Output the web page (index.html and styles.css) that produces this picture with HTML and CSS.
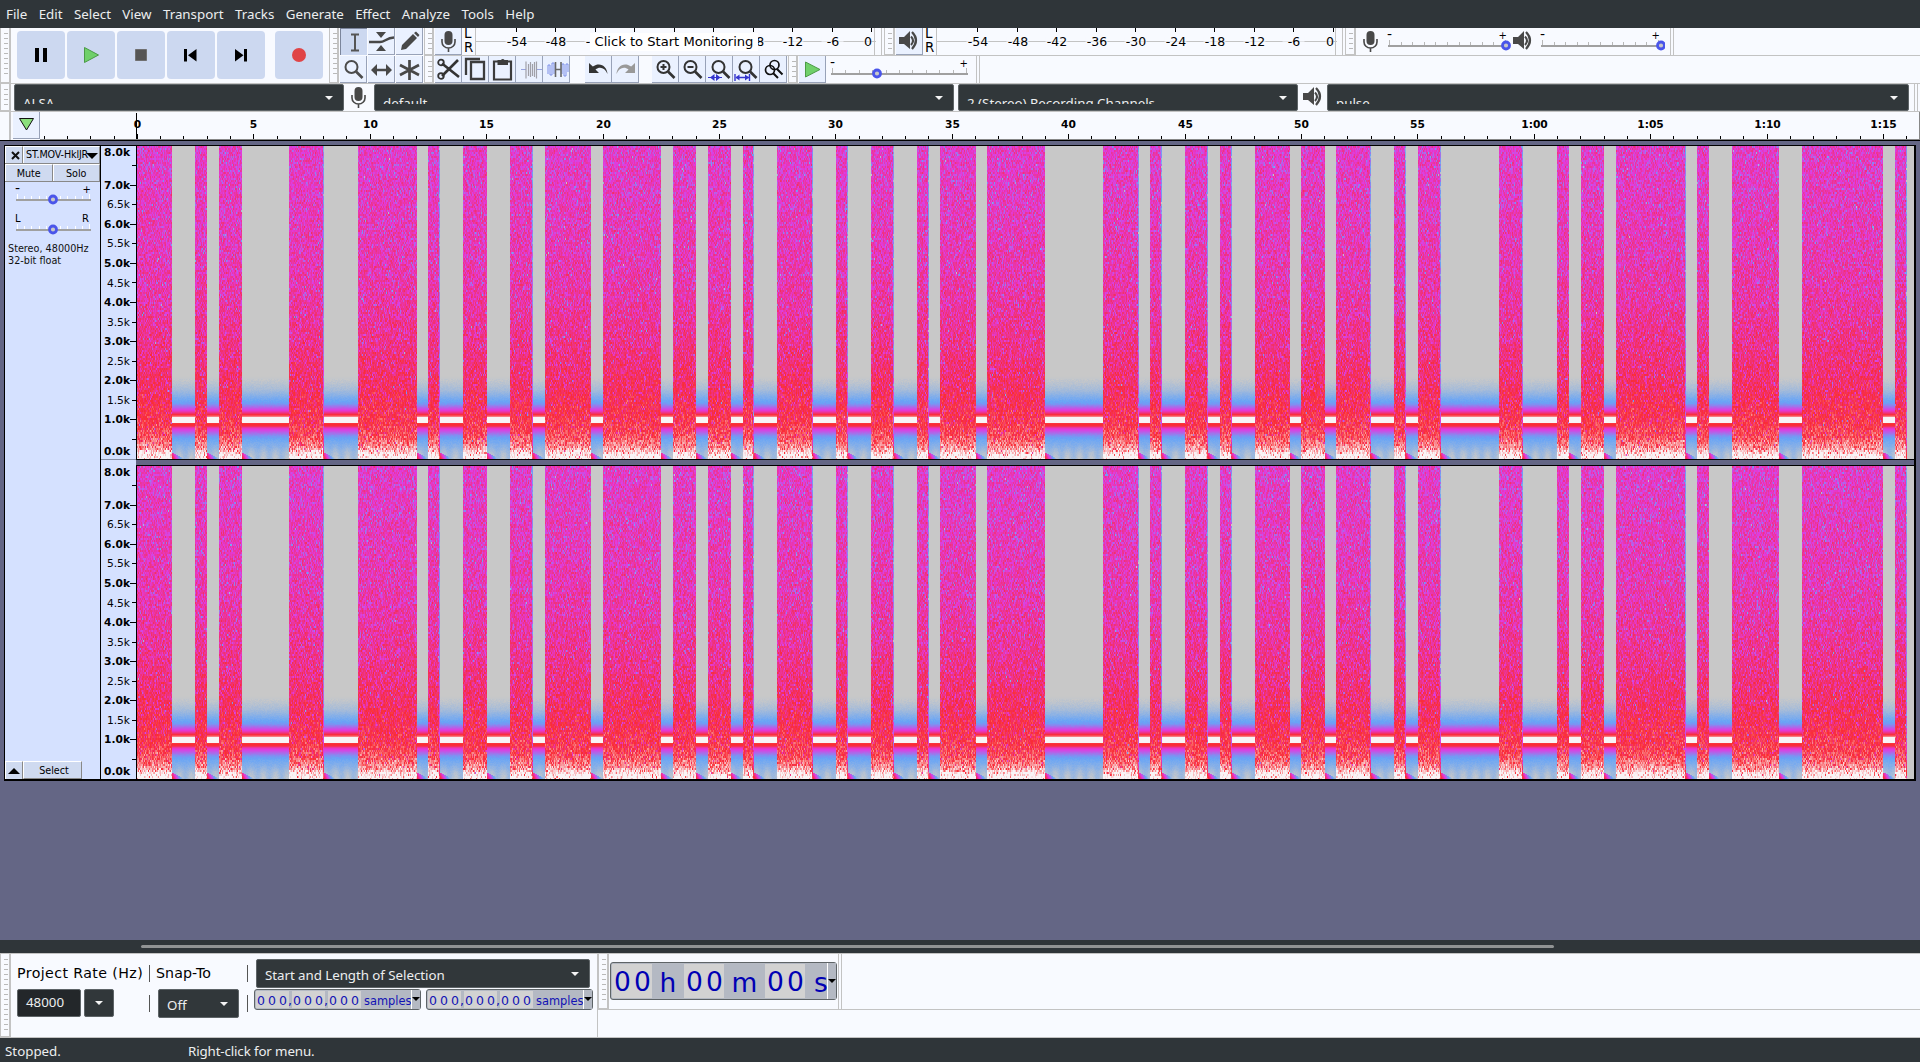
FILE: index.html
```html
<!DOCTYPE html>
<html lang="en">
<head>
<meta charset="utf-8">
<title>Audacity</title>
<link rel="stylesheet" href="styles.css">
</head>
<body>
<svg class="defs" width="0" height="0">
  <symbol id="mic" viewBox="0 0 27 27"><rect x="9.5" y="3" width="8" height="14" rx="4" fill="#484848"/><path d="M7 11v3a6.5 6 0 0 0 13 0v-3M13.5 20v4" fill="none" stroke="#484848" stroke-width="1.6"/></symbol>
  <symbol id="speaker" viewBox="0 0 27 27"><path d="M3 9h5l6-6v18l-6-5H3z" fill="#484848"/><path d="M15 8.500q4 4 0 8.500" fill="none" stroke="#484848" stroke-width="2"/><path d="M16 4q8 8 0 17" fill="none" stroke="#484848" stroke-width="2.200"/></symbol>
  <symbol id="lens" viewBox="0 0 27 27"><circle cx="11.500" cy="11" r="6" fill="none" stroke="currentColor" stroke-width="2"/><path d="M16 15.500l6.500 6.500" stroke="currentColor" stroke-width="2.600"/></symbol>
</svg>

<nav class="menubar"><span>File</span><span>Edit</span><span>Select</span><span>View</span><span>Transport</span><span>Tracks</span><span>Generate</span><span>Effect</span><span>Analyze</span><span>Tools</span><span>Help</span></nav>

<section class="dock">
  <div class="transport">
    <div class="grip"></div>
    <div class="transport-buttons">
      <button class="big"><svg viewBox="0 0 48 48"><path d="M18 17h4v14h-4zM26 17h4v14h-4z"/></svg></button>
      <button class="big"><svg viewBox="0 0 48 48"><path d="M17.500 16.500v15l14-7.500z" fill="#6fd06a" stroke="#4b9a47"/></svg></button>
      <button class="big"><svg viewBox="0 0 48 48"><path d="M18.500 18.500h11v11h-11z" fill="#555" stroke="#707070"/></svg></button>
      <button class="big"><svg viewBox="0 0 48 48"><path d="M17 18h3v12.500h-3zM29.500 18v12.500l-8.500-6.200z"/></svg></button>
      <button class="big"><svg viewBox="0 0 48 48"><path d="M27 18h3v12.500h-3zM18 18v12.500l8.500-6.200z"/></svg></button>
      <button class="big rec"><svg viewBox="0 0 48 48"><circle cx="24" cy="24" r="7" fill="#e04446"/></svg></button>
    </div>
  </div>
  <div class="tools">
    <div class="grip"></div>
    <div class="tool-grid">
      <button class="t on"><svg viewBox="0 0 27 27"><path d="M10 5.500h8M10 21.500h8M14 5.500v16" fill="none" stroke="#555" stroke-width="2"/></svg></button>
      <button class="t"><svg viewBox="0 0 27 27"><path d="M8 4h10l-5 6zM8 23h10l-5-6z" fill="#484848"/><path d="M1 14h11c5 0 6-4 14-4.500" fill="none" stroke="#484848" stroke-width="2.400"/></svg></button>
      <button class="t"><svg viewBox="0 0 27 27"><path d="M5 22l1-5L17 6l4 4L10 21zM18 5l2-1.500 3.500 3.500L22 9z" fill="#484848"/></svg></button>
      <button class="t grey"><svg viewBox="0 0 27 27"><use href="#lens"/></svg></button>
      <button class="t"><svg viewBox="0 0 27 27"><path d="M3 14l6-6v4.700h9V8l6 6-6 6v-4.700H9V20z" fill="#484848"/></svg></button>
      <button class="t"><svg viewBox="0 0 27 27"><path d="M13.500 4v20M4 9l19 10M4 19L23 9" stroke="#484848" stroke-width="2.700"/></svg></button>
    </div>
  </div>
  <div class="bars">
    <div class="bar">
      <div class="grip"></div>
      <button class="t"><svg viewBox="0 0 27 27"><use href="#mic"/></svg></button>
      <div class="lr"><span>L</span><span>R</span></div>
      <div class="meter rec-meter"><svg class="meter-scale" data-first="40.500" data-step="39.500" width="401" height="27"></svg><span class="monitor">Click to Start Monitoring</span></div>
      <i class="end"></i>
      <div class="grip wide"></div>
      <button class="t"><svg viewBox="0 0 27 27"><use href="#speaker"/></svg></button>
      <div class="lr"><span>L</span><span>R</span></div>
      <div class="meter"><svg class="meter-scale" data-first="41" data-step="39.550" width="401" height="27"></svg></div>
      <i class="end"></i>
      <div class="grip wide"></div>
      <svg class="mix-icon" viewBox="0 0 27 27"><use href="#mic"/></svg>
      <svg class="slider" width="128" height="27" data-len="119" data-pos="118" data-y="17" data-n="10"></svg>
      <svg class="mix-icon spk" viewBox="0 0 27 27"><use href="#speaker"/></svg>
      <svg class="slider" width="129" height="27" data-len="119" data-pos="120" data-y="17" data-n="10"></svg>
      <i class="end"></i>
    </div>
    <div class="bar">
      <div class="grip"></div>
      <button class="e"><svg viewBox="0 0 27 27"><path d="M7 7.500L24 21M7 20L23 4" stroke="#333" stroke-width="2.600"/><circle cx="6" cy="6.500" r="2.800" fill="none" stroke="#333" stroke-width="1.800"/><circle cx="6" cy="20" r="2.800" fill="none" stroke="#333" stroke-width="1.800"/></svg></button>
      <button class="e"><svg viewBox="0 0 27 27"><path d="M9 6h13v17H9zM4 19V3h14" fill="none" stroke="#3c3c3c" stroke-width="2.300"/></svg></button>
      <button class="e"><svg viewBox="0 0 27 27"><path d="M5 5.500h17v18H5z" fill="none" stroke="#3c3c3c" stroke-width="2.200"/><path d="M8.500 4H12a2 2 0 0 1 3.500 0H19v5H8.500z" fill="#3c3c3c"/></svg></button>
      <button class="e"><svg viewBox="0 0 27 27"><path d="M5 13.500h5M21 13.500h5" stroke="#98a4e0"/><path d="M10 5.500v17M12.500 8v12M14.500 6v15M16.500 8v12M18.500 6v15M20.500 5.500v17" stroke="#a0a0a8" stroke-width="1.200"/></svg></button>
      <button class="e"><svg viewBox="0 0 27 27"><path d="M5 18v-9h2v10h2V7h2v11M19 18V8h2v12h2V8h2v8" fill="none" stroke="#7d8fe8"/><path d="M12.500 6v15M18 6v15M12.500 13.500H18" stroke="#666" stroke-width="1.600"/></svg></button>
      <button class="e after-gap"><svg viewBox="0 0 27 27"><path d="M4 7v10h10l-3.500-3.500C15 10 20 12 22.500 18 22 10 15 5.500 7.800 10.500z" fill="#333"/></svg></button>
      <button class="e"><svg viewBox="0 0 27 27"><path d="M23 7v10H13l3.500-3.500C12 10 7 12 4.500 18 5 10 12 5.500 19.200 10.500z" fill="#999"/></svg></button>
      <button class="e after-gap"><svg viewBox="0 0 27 27"><use href="#lens"/><path d="M8.500 11h6M11.500 8v6" stroke="#333" stroke-width="2"/></svg></button>
      <button class="e"><svg viewBox="0 0 27 27"><use href="#lens"/><path d="M8.500 11h6" stroke="#333" stroke-width="2"/></svg></button>
      <button class="e"><svg viewBox="0 0 27 27"><use href="#lens" x="1"/><path d="M2 21.500h14" stroke="#3434cc"/><path d="M8.500 18v7L4 21.500zM10 18v7l4.500-3.500z" fill="#3434cc"/></svg></button>
      <button class="e"><svg viewBox="0 0 27 27"><use href="#lens" x="1"/><path d="M2 18v7M16.500 18v7M3 21.500h13" stroke="#3434cc" stroke-width="1.400"/><path d="M2.500 21.500l4-3v6zM16 21.500l-4-3v6z" fill="#3434cc"/></svg></button>
      <button class="e"><svg viewBox="0 0 27 27"><circle cx="10" cy="14" r="4.500" fill="none" stroke="#111" stroke-width="1.700"/><circle cx="14.500" cy="9" r="4.500" fill="none" stroke="#111" stroke-width="1.700"/><path d="M13 17l5 5M17 13l5.500 5.500" stroke="#111" stroke-width="2"/></svg></button>
      <div class="grip slim"></div>
      <button class="e"><svg viewBox="0 0 27 27"><path d="M6.500 6v15L21 13.500z" fill="#6fd06a" stroke="#4b9a47"/></svg></button>
      <svg class="slider speed" width="145" height="27" data-len="137" data-pos="46" data-y="17" data-n="10"></svg>
      <i class="end"></i>
    </div>
  </div>
</section>

<section class="devices">
  <div class="grip"></div>
  <div class="combo clipped w-host"><span>ALSA</span></div>
  <svg class="dev-icon" viewBox="0 0 27 27"><use href="#mic"/></svg>
  <div class="combo clipped w-input"><span>default</span></div>
  <div class="combo clipped w-chan"><span>2 (Stereo) Recording Channels</span></div>
  <svg class="dev-icon out" viewBox="0 0 27 27"><use href="#speaker"/></svg>
  <div class="combo clipped w-output"><span>pulse</span></div>
  <i class="end"></i>
</section>

<section class="timeline">
  <div class="blank"></div>
  <button class="pin"><svg width="26" height="26"><path d="M6.500 6.500h14l-7 11.500z" fill="#8be07c" stroke="#111"/></svg></button>
  <svg id="ruler" width="1880" height="28"></svg>
</section>

<main class="tracks">
  <div class="track">
    <aside class="panel">
      <div class="titlebar"><button class="close"><svg width="17" height="17"><path d="M6 5l7 7M13 5l-7 7" stroke="#111" stroke-width="2"/></svg></button><button class="name"><span>ST.MOV-HklJR</span><i></i></button></div>
      <div class="mutesolo"><button>Mute</button><button>Solo</button></div>
      <svg class="slider tr" width="96" height="30" data-len="75" data-pos="37" data-y="17" data-n="10" data-left="11"></svg>
      <svg class="slider tr pan" width="96" height="30" data-len="75" data-pos="37" data-y="17" data-n="10" data-left="11" data-a="L" data-b="R"></svg>
      <p>Stereo, 48000Hz<br>32-bit float</p>
      <div class="foot"><button class="up"><i></i></button><button class="sel">Select</button></div>
    </aside>
    <div class="channels">
      <div class="channel"><svg class="freq" width="35" height="313"></svg><canvas width="1777" height="313" data-seed="7"></canvas></div>
      <div class="separator"><i></i></div>
      <div class="channel"><svg class="freq" width="35" height="313"></svg><canvas width="1777" height="313" data-seed="91"></canvas></div>
    </div>
  </div>
</main>

<div class="scroll"><i></i></div>

<section class="bottom">
  <div class="grip"></div>
  <div class="selection">
    <div class="col rate"><label>Project Rate (Hz)</label><div class="pair"><div class="input">48000</div><div class="combo arrow"></div></div></div>
    <div class="rules"><i></i><i></i></div>
    <div class="col snap"><label>Snap-To</label><div class="combo off"><span>Off</span></div></div>
    <div class="rules second"><i></i><i></i></div>
    <div class="col range">
      <div class="combo mode"><span>Start and Length of Selection</span></div>
      <div class="times">
        <div class="num"><b>000</b><em>,</em><b>000</b><em>,</em><b>000</b><span>samples</span><i></i></div>
        <div class="num"><b>000</b><em>,</em><b>000</b><em>,</em><b>000</b><span>samples</span><i></i></div>
      </div>
    </div>
  </div>
  <div class="position">
    <div class="position-row">
      <div class="grip"></div>
      <div class="clock"><b>00</b><span>h</span><b>00</b><span>m</span><b>00</b><span class="s">s</span><i></i></div>
      <i class="end"></i>
    </div>
  </div>
</section>

<footer class="status"><span>Stopped.</span><span>Right-click for menu.</span></footer>
<script src="app.js"></script>
</body>
</html>
```
FILE: styles.css
```css
* { box-sizing: border-box; }
body { margin: 0; width: 1920px; height: 1062px; overflow: hidden; display: flex; flex-direction: column; background: #f8faff; font: 13.33px "Noto Sans", sans-serif; color: #000; }
button { border: 0; padding: 0; margin: 0; font: inherit; background: none; display: block; flex: none; }
svg { display: block; flex: none; }
.defs { position: absolute; }
.menubar { height: 28px; flex: none; background: #2f3539; color: #eceeef; display: flex; padding-left: 6px; gap: 11.4px; line-height: 28px; font-size: 13.33px; }

.grip { flex: none; width: 11px; border: 1px solid #c3c3c3; border-width: 0 2px 1px 1px; background: repeating-linear-gradient(#b9b9b9 0 1px, transparent 1px 5px) 3px 5px / 4px calc(100% - 9px) no-repeat; }
.dock { height: 56px; flex: none; display: flex; border-bottom: 1px solid #c3c3c3; }
.transport { display: flex; width: 329px; }
.transport-buttons { display: flex; gap: 2px; padding: 3px 0 0 6px; }
.big { width: 48px; height: 48px; border-radius: 4px; background: #ccd8f0; }
.rec { margin-left: 8px; }
.tools { display: flex; width: 95px; }
.tools .grip { width: 10px; }
.tool-grid { display: grid; grid-template-columns: repeat(3, 27px); grid-auto-rows: 27px; gap: 1px; padding-left: 1px; }
.t, .e { width: 27px; height: 27px; background: #eaf1ff; border-right: 1px solid #98a2b8; border-bottom: 1px solid #98a2b8; color: #333; }
.t svg, .e svg { width: 27px; height: 27px; }
.t.on { background: #ccd8f0; border: 1px solid #7c869c; border-width: 1px 0 0 1px; }
.grey { color: #4c4c4c; }
.bars { flex: 1; display: flex; flex-direction: column; }
.bar { display: flex; height: 28px; border-bottom: 1px solid #c3c3c3; }
.bar .grip { width: 10px; margin-right: 1px; }
.bar .grip.wide { width: 11px; }
.bar .grip.slim { margin-left: 1px; }
.lr { width: 13px; padding-left: 2px; font: 13.33px/14px "DejaVu Sans", sans-serif; display: flex; flex-direction: column; margin-top: -1px; height: 28px; }
.meter { width: 401px; position: relative; border-left: 1px solid #c3c3c3; overflow: hidden; }
.meter svg text { font: 12.5px "DejaVu Sans", sans-serif; }
.monitor { position: absolute; left: 114px; top: 5px; width: 168px; height: 18px; background: #fff; text-align: center; font: 13.1px/18px "DejaVu Sans", sans-serif; white-space: nowrap; }
.end { width: 4px; margin-left: 5px; border: 1px solid #c3c3c3; border-width: 0 1px; flex: none; }
.meter + .end { border-right: 0; width: 3px; }
.mix-icon { width: 27px; height: 27px; margin: 0 -1px 0 0; }
.mix-icon.spk { width: 27px; margin: 0 -1px 0 -1px; }
.slider text { font: 11px "DejaVu Sans", sans-serif; }
.slider.tr text { font-size: 10px; }
.after-gap { margin-left: 15px; }
.e:nth-of-type(8) { margin-left: 13px; }

.devices { height: 28px; flex: none; display: flex; border-bottom: 1px solid #c3c3c3; }
.combo { position: relative; background: #31373a; border: 1px solid #5e6467; border-radius: 2px; color: #eceeef; flex: none; }
.combo::after { content: ""; position: absolute; right: 10px; top: 50%; margin-top: -2px; border: 4px solid transparent; border-top-color: #f4f4f4; border-bottom: 0; }
.combo span { display: block; white-space: nowrap; }
.clipped { height: 27px; }
.clipped span { margin: 7px 0 0 8px; height: 12px; line-height: 23px; overflow: hidden; }
.w-host { width: 330px; margin-left: 3px; }
.w-input { width: 580px; margin-left: 1px; }
.w-chan { width: 340px; margin-left: 4px; }
.w-output { width: 582px; }
.dev-icon { width: 27px; height: 27px; margin: 0 1px 0 1px; }
.dev-icon.out { margin-left: 2px; margin-right: 0; }

.timeline { height: 29px; flex: none; display: flex; border-bottom: 1px solid #000; }
.blank { width: 11px; border-right: 2px solid #c3c3c3; }
.pin { width: 27px; height: 27px; margin-left: 2px; background: #eaf1ff; border-right: 1px solid #98a2b8; border-bottom: 1px solid #98a2b8; }
#ruler { border-right: 1px solid #888; border-bottom: 1px solid #888; }
#ruler text, .freq text { font: 10.67px "DejaVu Sans", sans-serif; }
#ruler text, .freq text.major { font-weight: bold; }

.tracks { flex: 1; background: #646685; padding: 4px 0 0 4px; }
.track { width: 1912px; height: 636px; border: 1px solid #000; border-right-width: 2px; border-bottom-width: 2px; display: flex; }
.panel { width: 96px; flex: none; background: #d5e1ff; border-right: 1px solid #000; display: flex; flex-direction: column; font: 9.6px "DejaVu Sans", sans-serif; color: #111; }
.titlebar, .mutesolo { display: flex; height: 18px; border-bottom: 1px solid #888; }
.panel button { background: #cfdaf0; border: 1px solid #fff; border-right-color: #888; border-bottom: 0; }
.close { width: 18px; }
.name { flex: 1; display: flex !important; align-items: center; white-space: nowrap; overflow: hidden; position: relative; }
.name span { padding-left: 2px; font-size: 9.6px; letter-spacing: -.15px; line-height: 14px; margin-top: -1px; }
.name i { position: absolute; right: 1px; top: 6px; border: 6px solid transparent; border-top-color: #000; border-bottom: 0; }
.mutesolo button { flex: 1; }
.tr { height: 30px; }
.panel p { margin: 1px 0 0 3px; line-height: 12px; font-size: 9.67px; white-space: nowrap; }
.foot { display: flex; height: 18px; margin-top: auto; }
.up { width: 18px; display: grid !important; place-items: center; }
.up i { border: 6px solid transparent; border-bottom-color: #000; border-top: 0; }
.panel .sel { width: 59px; padding-left: 3px; border-bottom: 1px solid #888; }
.channels { flex: 1; background: #d5e1ff; }
.channel { display: flex; }
.channel canvas { display: block; border-left: 1px solid #000; width: 1778px; }
.freq { width: 35px; background: #d5e1ff; }
.separator { height: 7px; display: flex; padding-left: 35px; border-top: 1px solid #8890a8; }
.separator i { flex: 1; margin-top: -1px; height: 7px; background: #646685; border: 1px solid #000; border-width: 1px 0; }

.scroll { height: 13px; flex: none; background: #2f3539; padding: 5px 0 0 141px; }
.scroll i { display: block; width: 1413px; height: 3px; border-radius: 2px; background: #919394; }

.bottom { height: 85px; flex: none; display: flex; border: 1px solid #c3c3c3; border-width: 1px 0; }
.bottom > .grip { width: 11px; }
.selection { width: 588px; display: flex; padding-left: 6px; }
.col label { display: block; font: 14.2px/20px "DejaVu Sans", sans-serif; height: 26px; white-space: nowrap; }
.rate, .snap { padding-top: 8px; }
.rate { width: 132px; }
.rate label { letter-spacing: .4px; padding-top: 1px; }
.snap label { padding-top: 1px; letter-spacing: .1px; }
.pair { display: flex; gap: 3px; }
.input { width: 64px; height: 28px; margin-top: 1px; padding-left: 8px; background: #23272a; border: 1px solid #5e6467; border-radius: 2px; color: #eceeef; line-height: 25px; }
.arrow { width: 30px; height: 28px; margin-top: 1px; }
.rules { display: flex; flex-direction: column; gap: 13px; padding-top: 11px; width: 7px; }
.rules i { width: 1px; height: 17px; background: #555; }
.snap { width: 91px; }
.off { width: 81px; height: 29px; margin: 1px 0 0 2px; }
.off span { padding: 6px 0 0 8px; }
.rules.second { width: 7px; }
.range { padding-top: 5px; }
.mode { width: 334px; height: 29px; margin-left: 2px; }
.mode span { padding: 6px 0 0 8px; letter-spacing: -.05px; }
.times { display: flex; gap: 5px; margin-top: 1px; }
.num, .clock { background: #b4b9c3; border: 1px solid #5e6467; border-radius: 3px; color: #1212b4; display: flex; align-items: stretch; font-family: "DejaVu Sans", sans-serif; position: relative; }
.num { width: 167px; height: 21px; padding: 1px 0 1px 1px; font-size: 12.5px; line-height: 20px; }
.num b, .clock b { font-weight: normal; background: #d2d2d2; white-space: nowrap; }
.num b { width: 33px; letter-spacing: 3px; padding-left: 1px; }
.num em { font-style: normal; width: 3px; text-indent: -1px; }
.num span { font-size: 11.4px; padding-left: 3px; line-height: 21px; }
.num i, .clock i { position: absolute; right: 0; top: 0; bottom: 0; width: 9px; border-left: 1px solid #fff; background: #b4b9c3; }
.num i::after, .clock i::after { content: ""; position: absolute; left: 0; top: 7px; border: 4px solid transparent; border-top-color: #000; border-bottom: 0; }
.position { flex: 1; border-left: 1px solid #c3c3c3; margin-left: -2px; }
.position-row { height: 56px; display: flex; border-bottom: 1px solid #c3c3c3; }
.clock { width: 227px; height: 38px; margin: 8px 0 0 1px; padding: 1px; font-size: 26.5px; line-height: 35px; color: #0000b4; }
.clock b { width: 40px; letter-spacing: 3.2px; padding-left: 2px; }
.clock span { width: 32px; text-align: center; line-height: 38px; }
.clock span + b + span { width: 41px; }
.clock span.s { width: 30px; padding-left: 2px; }
.clock i::after { top: 16px; }
.position .end { margin-left: 1px; }

.status { height: 24px; flex: none; background: #2f3539; color: #eceeef; line-height: 26px; display: flex; padding-left: 5px; letter-spacing: -.13px; }
.status span:first-child { width: 183px; letter-spacing: 0; }
```
FILE: app.js
```js
const NS = 'http://www.w3.org/2000/svg';

function add(parent, tag, attrs, text) {
  const node = document.createElementNS(NS, tag);
  for (const key in attrs) node.setAttribute(key, attrs[key]);
  if (text !== undefined) node.textContent = text;
  parent.appendChild(node);
}

// Level meter scales
document.querySelectorAll('.meter-scale').forEach(svg => {
  const first = +svg.dataset.first, step = +svg.dataset.step;
  add(svg, 'path', { d: 'M0 13.5h400M398.5 0v27', stroke: '#c3c3c3' });
  for (let i = 0; i < 10; i++) {
    const db = -54 + i * 6, x = Math.round(first + i * step) - 0.5;
    const cx = i === 9 ? x - 4 : x;
    add(svg, 'path', { d: `M${x} 0v4`, stroke: '#000' });
    // The monitoring hint hides the labels between -36 and -24 dB.
    if (svg.parentNode.classList.contains('rec-meter') && i > 2 && i < 6) continue;
    add(svg, 'rect', { x: cx - (db ? 11 : 4), y: 9, width: db ? 22 : 8, height: 9, fill: '#f8faff', 'fill-opacity': 0.6 });
    add(svg, 'text', { x: cx + 0.4, y: 18, 'text-anchor': 'middle' }, db);
  }
});

// Sliders
document.querySelectorAll('.slider').forEach(svg => {
  const d = svg.dataset, len = +d.len, y = +d.y, n = +d.n, left = +(d.left || 5);
  const tr = svg.classList.contains('tr');
  let ticks = '';
  for (let i = 0; i <= n; i++) {
    const x = Math.round(left + 1 + i * (len - 3) / n) + 0.5;
    ticks += `M${x} ${y - (i % n ? 3 : 5)}V${y}`;
  }
  add(svg, 'path', { d: ticks, stroke: tr ? '#fff' : '#b8b8b8' });
  add(svg, 'path', { d: `M${left} ${y + 1}h${len}`, stroke: '#a0a0a0', 'stroke-width': 2 });
  if (d.a) {
    add(svg, 'text', { x: left - 1, y: 10 }, d.a);
    add(svg, 'text', { x: left + len - 2, y: 10, 'text-anchor': 'end' }, d.b);
  } else {
    add(svg, 'text', { x: left - 1, y: 11, style: 'font-size:14px' }, '-');
    add(svg, 'text', { x: left + len, y: 11, 'text-anchor': 'end', style: 'font-size:10px' }, '+');
  }
  add(svg, 'circle', { cx: left + +d.pos, cy: y + 0.5, r: 3.5, fill: '#c8c8c8', stroke: '#4a55ea', 'stroke-width': 2.8 });
});

// Time ruler: 0 s sits at x = 137 of the window
const PPS = 23.28;
const ruler = document.getElementById('ruler');
for (let s = -4; s <= 76; s++) {
  const x = Math.floor(97.4 + s * PPS) + 0.5, major = s >= 0 && s % 5 === 0;
  add(ruler, 'path', { d: `M${x} ${major ? 22 : 24}V27`, stroke: '#000' });
  if (major) {
    const label = s < 60 ? s : '1:' + String(s - 60).padStart(2, '0');
    add(ruler, 'text', { x: x, y: 16, 'text-anchor': 'middle' }, label);
  }
}
add(ruler, 'path', { d: 'M96.500 1V27', stroke: '#000' });

// Frequency rulers
document.querySelectorAll('.freq').forEach(svg => {
  const h = +svg.getAttribute('height');
  for (let i = 0; i <= 16; i++) {
    const major = i % 2 === 0, y = h - i * h / 16;
    if (i > 0 && i < 16) add(svg, 'path', { d: `M${major ? 29 : 31} ${Math.floor(y) + 0.5}H35`, stroke: '#000' });
    if (i === 1 || i === 15) continue;
    const ty = i === 0 ? h - 4 : i === 16 ? 10 : y + 3.6;
    add(svg, 'text', { x: 29, y: Math.round(ty), 'text-anchor': 'end', class: major ? 'major' : 'minor' }, (i / 2).toFixed(1) + 'k');
  }
});

// Spectrogram
const NOISE = [[0,1.5],[2.5,3],[3.5,4.5],[6.5,8],[9.5,12],[12.5,13],[14,15],[16,17],[17.5,19.5],[20,22.5],[23,24],[24.5,25.5],[26,26.5],[27.5,29],[30,30.5],[31.5,32.5],[33.5,34],[34.5,36],[36.5,39],[41.5,43],[43.5,44],[45,46],[46.5,47],[48,49.5],[50,51],[51.5,53],[54,54.5],[55,56],[58.5,59.5],[61,61.5],[62,63],[63.5,66.5],[67,67.5],[68.5,70.5],[71.5,75],[75.5,76]];
const STOPS = [[200,200,200],[104,164,246],[226,58,222],[250,44,52],[248,244,246]];

function color(v) {
  v = Math.max(0, Math.min(0.9999, v)) * 4;
  const i = Math.floor(v), f = v - i;
  return STOPS[i].map((c, k) => c + (STOPS[i + 1][k] - c) * f);
}

function curve(points, x) {
  for (let i = 1; i < points.length; i++) {
    if (x <= points[i][0]) {
      const [x0, y0] = points[i - 1], [x1, y1] = points[i];
      return y0 + (y1 - y0) * (x - x0) / (x1 - x0);
    }
  }
  return points[points.length - 1][1];
}

const NOISE_LEVEL = [[0,1.08],[0.15,1.02],[0.3,0.91],[0.6,0.81],[1,0.76],[2,0.695],[3,0.645],[4,0.61],[5,0.585],[8,0.55]];
const ABOVE = [[0,1],[3,1],[3.5,0.85],[5,0.76],[6,0.7],[9,0.53],[12,0.42],[16,0.28],[22,0.2],[30,0.09],[39,0.02],[44,0]];
const BELOW = [[0,1],[3,1],[3.5,0.76],[6,0.73],[8,0.55],[12,0.42],[16,0.29],[20,0.23],[27,0.16],[33,0.09],[40,0.06]];

document.querySelectorAll('canvas').forEach(canvas => {
  let state = +canvas.dataset.seed;
  const rand = () => {
    state = (state * 1664525 + 1013904223) >>> 0;
    return (state + 1) / 4294967297;
  };
  const ctx = canvas.getContext('2d'), w = canvas.width, h = canvas.height;
  const img = ctx.createImageData(w, h), toneY = h - 39;
  for (let x = 0; x < w; x++) {
    const t = x / PPS;
    const band = NOISE.find(b => t >= b[0] - 0.01 && t < b[1]);
    const prev = NOISE.filter(b => b[1] <= t).pop();
    const since = prev ? (t - prev[1]) * PPS : 99;
    const edge = band && (x + 1) / PPS >= band[1] && band[1] * 2 % 3 !== 0;
    let v = 0;
    for (let y = 0; y < h; y++) {
      const k = (h - y) / 39.1;
      if (band) {
        if (y % 2 === 0) {
          v = curve(NOISE_LEVEL, k) + 10 * Math.log10(-Math.log(rand())) / 76;
          if (edge) v -= 0.25;
        }
      } else if (t > 76) {
        v = 0;
      } else {
        const d = y + 0.5 - toneY;
        v = curve(d < 0 ? ABOVE : BELOW, Math.abs(d));
        if (Math.abs(d) > 12 && v > 0.01) v += (rand() - 0.5) * 0.035;
        if (d > 22) v += 0.05 * Math.cos(x * Math.PI / 6) * (d - 22) / 16;
        const foot = 7 - since / 2;
        if (h - y < foot && since < 12) v = Math.max(v, 0.8 - since / 15 - (h - y) * 0.03);
      }
      const c = color(v), p = (y * w + x) * 4;
      img.data[p] = c[0];
      img.data[p + 1] = c[1];
      img.data[p + 2] = c[2];
      img.data[p + 3] = 255;
    }
  }
  ctx.putImageData(img, 0, 0);
});
```
